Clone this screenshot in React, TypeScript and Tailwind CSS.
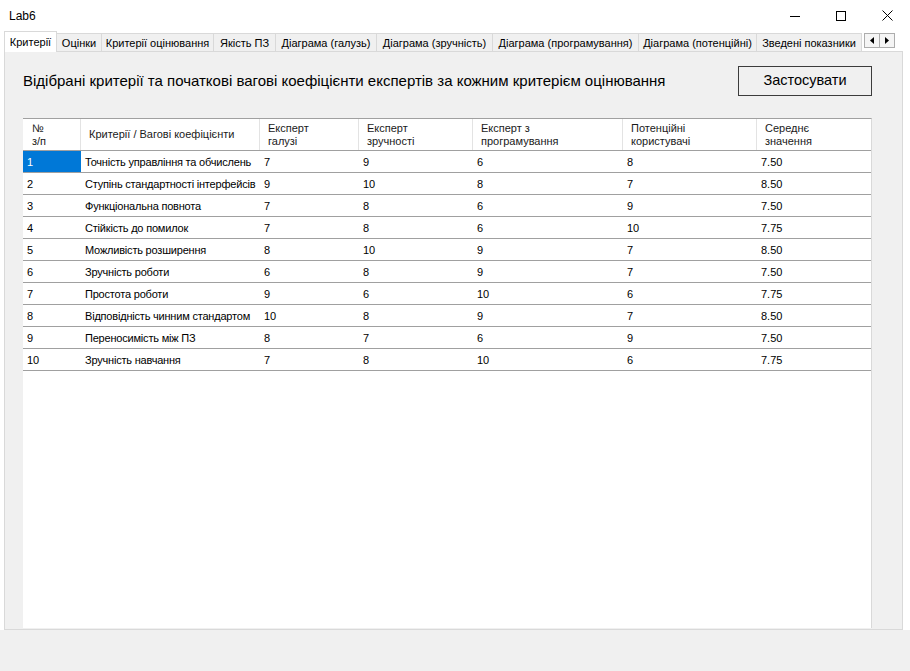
const tabs = [
  { label: 'Критерії', w: 'w-[53px]' },
  { label: 'Оцінки', w: 'w-[46px]' },
  { label: 'Критерії оцінювання', w: 'w-[113px]' },
  { label: 'Якість ПЗ', w: 'w-[63px]' },
  { label: 'Діаграма (галузь)', w: 'w-[102px]' },
  { label: 'Діаграма (зручність)', w: 'w-[117px]' },
  { label: 'Діаграма (програмування)', w: 'w-[147px]' },
  { label: 'Діаграма (потенційні)', w: 'w-[119px]' },
  { label: 'Зведені показники', w: 'w-[106px]' },
];

const headers = [
  ['№', 'з/п'],
  ['Критерії / Вагові коефіцієнти'],
  ['Експерт', 'галузі'],
  ['Експерт', 'зручності'],
  ['Експерт з', 'програмування'],
  ['Потенційні', 'користувачі'],
  ['Середнє', 'значення'],
];

const rows = [
  ['1', 'Точність управління та обчислень', '7', '9', '6', '8', '7.50'],
  ['2', 'Ступінь стандартності інтерфейсів', '9', '10', '8', '7', '8.50'],
  ['3', 'Функціональна повнота', '7', '8', '6', '9', '7.50'],
  ['4', 'Стійкість до помилок', '7', '8', '6', '10', '7.75'],
  ['5', 'Можливість розширення', '8', '10', '9', '7', '8.50'],
  ['6', 'Зручність роботи', '6', '8', '9', '7', '7.50'],
  ['7', 'Простота роботи', '9', '6', '10', '6', '7.75'],
  ['8', 'Відповідність чинним стандартом', '10', '8', '9', '7', '8.50'],
  ['9', 'Переносимість між ПЗ', '8', '7', '6', '9', '7.50'],
  ['10', 'Зручність навчання', '7', '8', '10', '6', '7.75'],
];

const cols = 'grid grid-cols-[58px_179px_99px_114px_150px_134px_115px]';

const TitleBar = () => (
  <div className="h-[31px] bg-white flex items-center shrink-0">
    <span className="pl-[9px] text-[12px] text-black">Lab6</span>
    <div className="ml-auto flex items-center h-full">
      <div className="w-[46px] h-full flex items-center justify-center">
        <svg width="10" height="10" viewBox="0 0 10 10">
          <line x1="0" y1="5.5" x2="10" y2="5.5" stroke="#000" strokeWidth="1" />
        </svg>
      </div>
      <div className="w-[46px] h-full flex items-center justify-center">
        <svg width="10" height="10" viewBox="0 0 10 10">
          <rect x="0.5" y="0.5" width="9" height="9" fill="none" stroke="#000" strokeWidth="1" />
        </svg>
      </div>
      <div className="w-[46px] h-full flex items-center justify-center">
        <svg width="11" height="11" viewBox="0 0 11 11">
          <path d="M0.5 0.5 L10.5 10.5 M10.5 0.5 L0.5 10.5" stroke="#000" strokeWidth="1" />
        </svg>
      </div>
    </div>
  </div>
);

const TabStrip = () => (
  <div className="h-[20px] flex items-end">
    {tabs.map((tab, index) =>
      index === 0 ? (
        <div
          key={tab.label}
          className={`${tab.w} h-[21px] -mb-px relative z-10 bg-white border border-b-0 border-[#d9d9d9] flex items-center justify-center text-[11px] text-black whitespace-nowrap`}
        >
          {tab.label}
        </div>
      ) : (
        <div
          key={tab.label}
          className={`${tab.w} h-[18px] -ml-px bg-[#f0f0f0] border border-b-0 border-[#d9d9d9] flex items-center justify-center pt-px text-[11px] text-black whitespace-nowrap`}
        >
          {tab.label}
        </div>
      )
    )}
    <div className="ml-[2px] self-start mt-[2px] flex">
      <div className="w-[16px] h-[15px] border border-[#adadad] bg-[#f5f5f5] flex items-center justify-center">
        <svg width="4" height="7" viewBox="0 0 4 7">
          <path d="M4 0 L0 3.5 L4 7 Z" fill="#000" />
        </svg>
      </div>
      <div className="w-[16px] h-[15px] -ml-px border border-[#adadad] bg-[#f5f5f5] flex items-center justify-center">
        <svg width="4" height="7" viewBox="0 0 4 7">
          <path d="M0 0 L4 3.5 L0 7 Z" fill="#000" />
        </svg>
      </div>
    </div>
  </div>
);

const Grid = () => (
  <div className="flex-1 bg-white border-t border-[#a0a0a0] border-r border-r-[#d9d9d9] flex flex-col">
    <div className={`${cols} h-[32px] border-b border-[#a0a0a0]`}>
      {headers.map((lines, index) => (
        <div
          key={index}
          className={`flex flex-col justify-center text-[11px] leading-[13px] text-[#1a1a1a] ${index === 0 ? 'pl-[9px]' : 'pl-[8px]'} ${index < headers.length - 1 ? 'border-r border-[#e3e3e3]' : ''}`}
        >
          {lines.map((line) => (
            <span key={line} className="whitespace-nowrap">
              {line}
            </span>
          ))}
        </div>
      ))}
    </div>
    {rows.map((row, rowIndex) => (
      <div key={rowIndex} className={`${cols} h-[22px] border-b border-[#a0a0a0]`}>
        {row.map((cell, cellIndex) => (
          <div
            key={cellIndex}
            className={`flex items-center pl-[4px] pt-px text-[11px] whitespace-nowrap overflow-hidden ${
              cellIndex === 1 ? 'tracking-[-0.2px]' : ''
            } ${rowIndex === 0 && cellIndex === 0 ? 'bg-[#0078d7] text-white' : 'text-black'}`}
          >
            {cell}
          </div>
        ))}
      </div>
    ))}
  </div>
);

export default function App() {
  return (
    <div className="w-[910px] h-[671px] bg-[#f0f0f0] flex flex-col overflow-hidden font-['Liberation_Sans',Arial,sans-serif]">
      <TitleBar />
      <div className="bg-white pl-[4px] pr-[7px] shrink-0">
        <TabStrip />
        <div className="h-[579px] border border-[#d9d9d9] bg-[#f0f0f0] flex flex-col pt-[14px] pl-[18px] pr-[30px] pb-[1px]">
          <div className="h-[30px] flex items-center justify-between shrink-0">
            <span className="text-[15px] text-black whitespace-nowrap">
              Відібрані критерії та початкові вагові коефіцієнти експертів за кожним критерієм оцінювання
            </span>
            <button className="w-[134px] h-[30px] border border-[#3c3c3c] bg-[#f0f0f0] text-[14.5px] text-black">
              Застосувати
            </button>
          </div>
          <div className="h-[22px] shrink-0" />
          <Grid />
        </div>
      </div>
    </div>
  );
}
